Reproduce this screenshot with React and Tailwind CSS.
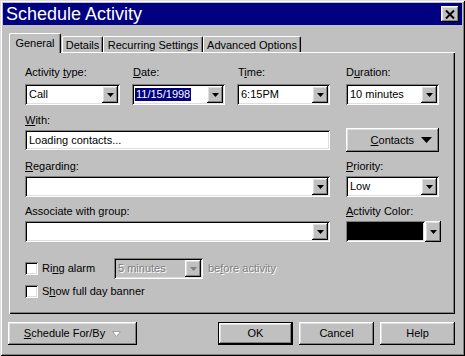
import React from 'react';

const raised = 'shadow-[inset_-1px_-1px_0_#000,inset_1px_1px_0_#fff,inset_-2px_-2px_0_#808080,inset_2px_2px_0_#dfdfdf]';
const sunken = 'shadow-[inset_1px_1px_0_#808080,inset_-1px_-1px_0_#fff,inset_2px_2px_0_#000,inset_-2px_-2px_0_#dfdfdf]';

function Arrow({ color = '#000' }) {
  return (
    <svg width="7" height="4" viewBox="0 0 7 4">
      <path d="M0 0h7L3.5 4z" fill={color} />
    </svg>
  );
}

function DropBtn({ disabled }) {
  return (
    <div className={`w-[16px] h-[17px] shrink-0 bg-[#c0c0c0] flex items-center justify-center ${raised}`}>
      <Arrow color={disabled ? '#808080' : '#000'} />
    </div>
  );
}

function Combo({ className, value, selected, disabled }) {
  return (
    <div className={`flex items-center h-[21px] p-[2px] ${sunken} ${disabled ? 'bg-[#c0c0c0]' : 'bg-white'} ${className}`}>
      <div className="flex-1 pl-[1px] overflow-hidden whitespace-nowrap">
        {value && (
          <span
            className={`px-[1px] leading-[13px] inline-block ${
              selected ? 'bg-[#000080] text-white' : ''
            } ${disabled ? 'text-[#808080] [text-shadow:1px_1px_0_#fff]' : ''}`}
          >
            {value}
          </span>
        )}
      </div>
      <DropBtn disabled={disabled} />
    </div>
  );
}

function Label({ children, className = '' }) {
  return <div className={`h-[13px] leading-[13px] whitespace-nowrap ${className}`}>{children}</div>;
}

function Check({ children }) {
  return (
    <div className="flex items-center">
      <div className={`w-[13px] h-[13px] bg-white ${sunken}`} />
      <span className="ml-[4px] leading-[13px]">{children}</span>
    </div>
  );
}

function Tab({ children, active, className }) {
  return active ? (
    <div className={`relative z-10 h-[20px] -mb-[1px] bg-[#c0c0c0] border-l border-t border-white border-r border-r-black rounded-t-[2px] shadow-[inset_-1px_0_0_#808080] flex justify-center pt-[3px] leading-[13px] ${className}`}>
      {children}
    </div>
  ) : (
    <div className={`h-[16px] bg-[#c0c0c0] border-l border-t border-white border-r border-r-black rounded-t-[2px] shadow-[inset_-1px_0_0_#808080] flex justify-center pt-[2px] leading-[13px] ${className}`}>
      {children}
    </div>
  );
}

export default function App() {
  return (
    <div className="w-[465px] h-[356px] overflow-hidden bg-[#c0c0c0] font-['Liberation_Sans',Arial,sans-serif] text-[11px] text-black">
      <div className="w-full h-full p-[3px] shadow-[inset_1px_1px_0_#dfdfdf,inset_-1px_-1px_0_#000,inset_2px_2px_0_#fff,inset_-2px_-2px_0_#808080]">
        {/* Title bar */}
        <div className="h-[22px] bg-[#000080] flex items-center justify-between pl-[3px] pr-[3px]">
          <span className="text-white text-[18px] leading-[22px]">Schedule Activity</span>
          <div className={`w-[18px] h-[16px] bg-[#c0c0c0] flex items-center justify-center ${raised}`}>
            <svg width="10" height="9" viewBox="0 0 10 9">
              <path d="M1 0.5L9 8.5M9 0.5L1 8.5" stroke="#000" strokeWidth="2" />
            </svg>
          </div>
        </div>

        {/* Tabs */}
        <div className="ml-[6px] mt-[8px] h-[19px] flex items-end">
          <Tab active className="w-[52px]">General</Tab>
          <Tab className="w-[41px] ml-[1px]">Details</Tab>
          <Tab className="w-[100px]">Recurring Settings</Tab>
          <Tab className="w-[98px]">Advanced Options</Tab>
        </div>

        {/* Panel */}
        <div className="ml-[6px] w-[446px] h-[262px] pl-[16px] pt-[14px] shadow-[inset_1px_1px_0_#fff,inset_-1px_-1px_0_#000,inset_-2px_-2px_0_#808080]">
          {/* Row A */}
          <div className="flex">
            <div className="w-[95px]">
              <Label>Activity <u>t</u>ype:</Label>
              <Combo className="mt-[5px] w-[95px]" value="Call" />
            </div>
            <div className="w-[93px] ml-[12px]">
              <Label className="pl-[1px]"><u>D</u>ate:</Label>
              <Combo className="mt-[5px] w-[93px]" value="11/15/1998" selected />
            </div>
            <div className="w-[93px] ml-[12px]">
              <Label className="pl-[1px]">T<u>i</u>me:</Label>
              <Combo className="mt-[5px] w-[93px]" value="6:15PM" />
            </div>
            <div className="w-[93px] ml-[16px]">
              <Label>D<u>u</u>ration:</Label>
              <Combo className="mt-[5px] w-[93px]" value="10 minutes" />
            </div>
          </div>

          {/* Row B */}
          <div className="flex mt-[9px]">
            <div className="w-[305px]">
              <Label><u>W</u>ith:</Label>
              <div className={`mt-[3px] h-[20px] bg-white p-[2px] pl-[4px] leading-[16px] ${sunken}`}>Loading contacts...</div>
            </div>
            <div className={`ml-[16px] mt-[14px] w-[93px] h-[24px] flex items-center justify-end pr-[7px] ${raised}`}>
              <span><u>C</u>ontacts</span>
              <svg className="ml-[7px]" width="11" height="6" viewBox="0 0 11 6">
                <path d="M0 0h11L5.5 6z" fill="#000" />
              </svg>
            </div>
          </div>

          {/* Row C */}
          <div className="flex mt-[8px]">
            <div className="w-[305px]">
              <Label><u>R</u>egarding:</Label>
              <Combo className="mt-[3px] w-[305px]" />
            </div>
            <div className="w-[93px] ml-[16px]">
              <Label><u>P</u>riority:</Label>
              <Combo className="mt-[3px] w-[93px]" value="Low" />
            </div>
          </div>

          {/* Row D */}
          <div className="flex mt-[8px]">
            <div className="w-[305px]">
              <Label>Associate with group:</Label>
              <Combo className="mt-[3px] w-[305px]" />
            </div>
            <div className="ml-[16px]">
              <Label><u>A</u>ctivity Color:</Label>
              <div className="mt-[3px] flex">
                <div className={`w-[79px] h-[21px] p-[2px] bg-white ${sunken}`}>
                  <div className="w-full h-full bg-black" />
                </div>
                <div className={`w-[16px] h-[21px] bg-[#c0c0c0] flex items-center justify-center ${raised}`}>
                  <Arrow />
                </div>
              </div>
            </div>
          </div>

          {/* Row E */}
          <div className="flex items-center mt-[16px] h-[21px]">
            <div className="w-[89px]">
              <Check>Ri<u>n</u>g alarm</Check>
            </div>
            <Combo className="w-[89px]" value="5 minutes" disabled />
            <span className="ml-[5px] text-[#808080] [text-shadow:1px_1px_0_#fff]">be<u>f</u>ore activity</span>
          </div>

          {/* Row F */}
          <div className="mt-[6px]">
            <Check>S<u>h</u>ow full day banner</Check>
          </div>
        </div>

        {/* Bottom buttons */}
        <div className="flex mt-[8px] h-[23px]">
          <div className={`ml-[5px] w-[129px] h-[23px] flex items-center justify-center ${raised}`}>
            <span><u>S</u>chedule For/By</span>
            <svg className="ml-[7px]" width="9" height="6" viewBox="0 0 9 6">
              <path d="M0.5 0.5h8L4.5 5.5z" fill="#fff" stroke="#a0a0a0" strokeWidth="1" />
            </svg>
          </div>
          <div className="ml-[81px] w-[75px] h-[23px] border border-black">
            <div className={`w-full h-full flex items-center justify-center ${raised}`}>OK</div>
          </div>
          <div className={`ml-[6px] w-[75px] h-[23px] flex items-center justify-center ${raised}`}>Cancel</div>
          <div className={`ml-[6px] w-[75px] h-[23px] flex items-center justify-center ${raised}`}>Help</div>
        </div>
      </div>
    </div>
  );
}
